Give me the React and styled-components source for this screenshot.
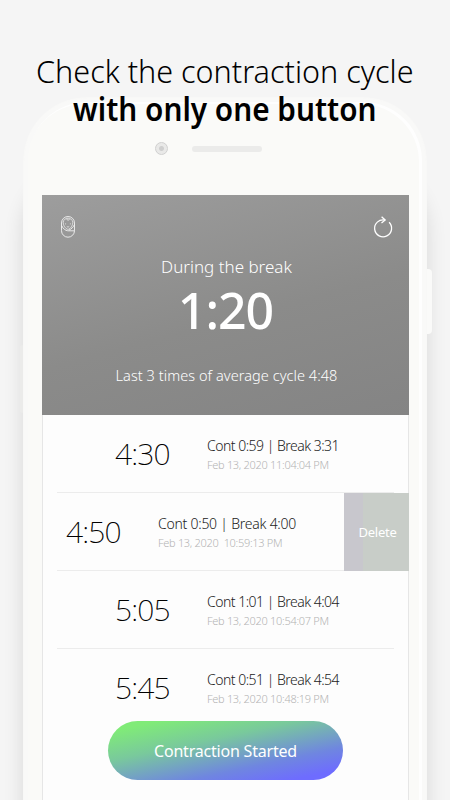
import styled, { createGlobalStyle } from 'styled-components'

const GlobalStyle = createGlobalStyle`
  * {
    box-sizing: border-box;
  }

  body {
    margin: 0;
    background: #f5f5f5;
    font-family: 'Noto Sans', 'Open Sans', sans-serif;
  }
`

const Page = styled.div`
  width: 450px;
  height: 800px;
  overflow: hidden;
  display: flex;
  flex-direction: column;
  align-items: center;
  background: #f5f5f5;
`

const Headline = styled.h1`
  position: relative;
  z-index: 1;
  height: 128px;
  margin: 0;
  padding-top: 52px;
  font-size: 32px;
  line-height: 38px;
  text-align: center;
  white-space: nowrap;
  color: #000;
`

// squeezed a little, the face is wider than the headline should be
const HeadlineText = styled.span`
  display: block;
  font-weight: ${props => (props.$bold ? 600 : 300)};
  transform: scaleX(${props => (props.$bold ? 0.93 : 0.954)});
`

const Phone = styled.div`
  position: relative;
  flex: none;
  width: 404px;
  height: 860px;
  margin-top: -31px;
  padding: 0 18px;
  display: flex;
  flex-direction: column;
  border-radius: 64px;
  border: 1px solid #f8f8f7;
  background: #fafaf8;
  box-shadow:
    inset 0 0 0 4px #f9f9f8,
    inset -2px 1px 0 5px #fefefe,
    0 72px 20px 0 rgba(0, 0, 0, 0.12);
`

// the hardware buttons sticking out of the sides
const SideButton = styled.div`
  position: absolute;
  top: ${props => props.$top}px;
  ${props => props.$side}: ${props => (props.$side === 'right' ? -6 : -4)}px;
  width: ${props => (props.$side === 'right' ? 5 : 3)}px;
  height: ${props => props.$height}px;
  border-radius: ${props => (props.$side === 'right' ? '0 4px 4px 0' : '4px 0 0 4px')};
  background: ${props => (props.$side === 'right' ? '#fafaf9' : '#ebebea')};
`

const Bezel = styled.div`
  height: 97px;
  flex: none;
  padding: 44px 0 0 113px;
  display: flex;
  align-items: flex-start;
  gap: 24px;
`

const Camera = styled.div`
  width: 13px;
  height: 13px;
  border: 1px solid #d0d0d0;
  border-radius: 50%;
  background: radial-gradient(circle, #cfcfcf 0 2px, #e9e9e8 3px);
`

const Speaker = styled.div`
  width: 70px;
  height: 6px;
  margin-top: 4px;
  border-radius: 3px;
  background: #ebebea;
`

const Screen = styled.div`
  flex: 1;
  width: 367px;
  background: #fdfdfd;
  border: solid #e6e6e6;
  border-width: 0 1px;
`

const Summary = styled.header`
  height: 220px;
  margin: 0 -1px;
  padding: 20px 15px 0 17px;
  display: flex;
  flex-direction: column;
  color: #fff;
  background: linear-gradient(165deg, #9d9d9d 0%, #8b8b8a 55%, #848484 100%);
`

const Toolbar = styled.div`
  display: flex;
  justify-content: space-between;
  height: 39px;
`

const Status = styled.div`
  font-size: 17px;
  line-height: 26px;
  font-weight: 300;
  text-align: center;
`

const Timer = styled.div`
  height: 60px;
  padding-right: 2px;
  font-size: 50px;
  line-height: 60px;
  font-weight: 500;
  text-align: center;
  letter-spacing: -1px;
`

const Average = styled(Status)`
  margin-top: 22px;
  font-size: 14.5px;
  letter-spacing: 0.06px;
`

const Row = styled.div`
  height: 78px;
  display: flex;
  padding-left: ${props => (props.$swiped ? 23 : 72)}px;
`

const Divider = styled.div`
  height: 1px;
  margin: -1px ${props => props.$right}px 0 14px;
  background: #ececec;
`

const Cycle = styled.div`
  width: 92px;
  flex: none;
  line-height: 78px;
  font-size: 30px;
  font-weight: 200;
  color: #000;
  letter-spacing: -0.9px;
`

const Details = styled.div`
  flex: 1;
  padding-top: 21px;
  white-space: nowrap;
`

const Lengths = styled.div`
  font-size: 14px;
  line-height: 20px;
  font-weight: 300;
  letter-spacing: ${props => props.$spacing ?? -0.55}px;
  word-spacing: 0.2px;
  color: #222;
`

const Stamp = styled.div`
  font-size: 11px;
  line-height: 18px;
  font-weight: 300;
  letter-spacing: -0.3px;
  white-space: pre;
  color: #b4b4b4;
`

const DeleteButton = styled.button`
  width: 65px;
  height: 78px;
  margin-right: -1px;
  padding: 0 0 0 2px;
  border: 0;
  font: 400 13px 'Noto Sans', sans-serif;
  letter-spacing: -0.25px;
  color: #fff;
  background: linear-gradient(90deg, #c8c7cd 0 19px, #c8cdc8 19px);
`

const StartButton = styled.button`
  display: block;
  width: 235px;
  height: 59px;
  margin: -6px 0 0 65px;
  position: relative;
  padding: 0;
  border: 0;
  border-radius: 30px;
  font: 400 16px 'Noto Sans', sans-serif;
  letter-spacing: -0.2px;
  color: #fff;
  background: linear-gradient(168deg, #80eb78 10%, #79c99c 37%, #6f86e0 70%, #6e6cff 90%);
`

const BabyIcon = () => (
  <svg width="16" height="24" viewBox="0 0 16 24" fill="none" stroke="#f2f2f2" strokeWidth="0.9">
    <rect x="2.5" y="1.5" width="13" height="20.7" rx="6.5" />
    <path d="M4.200 7.200c0 3.800 2.200 6.400 4.800 7.300 2.600-.9 4.800-3.500 4.800-7.300-.8-5.400-8.800-5.400-9.600 0z" strokeWidth=".7" />
    <path d="M8 3.400c-.6 2.400 2.600 2.400 2.200.4" strokeWidth=".8" />
    <path d="M6.600 8.400v1M11.400 8.400v1M7.800 11.500c.8.6 1.600.6 2.400 0" strokeWidth=".8" />
    <path d="M2.600 10.600c1.500 3.300 3.800 4.900 6.200 5.200h6.700M15.400 9.500c-.8 2.500-3 4.500-5.400 5.600" />
  </svg>
)

const ResetIcon = () => (
  <svg width="22" height="24" viewBox="0 0 22 24" fill="none" stroke="#fff" strokeWidth="1.3">
    <path d="M17.100 7.300A8.500 8.500 0 1 1 12.800 5" />
    <path d="M9.600 1.700l3.600 3.300-3.700 3" />
  </svg>
)

const contractions = [
  { cycle: '4:30', cont: '0:59', rest: '3:31', stamp: 'Feb 13, 2020 11:04:04 PM' },
  { cycle: '4:50', cont: '0:50', rest: '4:00', stamp: 'Feb 13, 2020  10:59:13 PM', swiped: true },
  { cycle: '5:05', cont: '1:01', rest: '4:04', stamp: 'Feb 13, 2020 10:54:07 PM' },
  { cycle: '5:45', cont: '0:51', rest: '4:54', stamp: 'Feb 13, 2020 10:48:19 PM' },
]

const Contraction = ({ item, last }) => (
  <>
    <Row $swiped={item.swiped}>
      <Cycle>{item.cycle}</Cycle>
      <Details>
        <Lengths $spacing={item.swiped ? -0.28 : undefined}>
          Cont {item.cont} | Break {item.rest}
        </Lengths>
        <Stamp>{item.stamp}</Stamp>
      </Details>
      {item.swiped && <DeleteButton>Delete</DeleteButton>}
    </Row>
    {!last && <Divider $right={item.swiped ? 64 : 14} />}
  </>
)

const App = () => (
  <Page>
    <GlobalStyle />
    <Headline>
      <HeadlineText>Check the contraction cycle</HeadlineText>
      <HeadlineText $bold>with only one button</HeadlineText>
    </Headline>
    <Phone>
      <SideButton $side="left" $top={247} $height={68} />
      <SideButton $side="right" $top={171} $height={65} />
      <Bezel>
        <Camera />
        <Speaker />
      </Bezel>
      <Screen>
        <Summary>
          <Toolbar>
            <BabyIcon />
            <ResetIcon />
          </Toolbar>
          <Status>During the break</Status>
          <Timer>1:20</Timer>
          <Average>Last 3 times of average cycle 4:48</Average>
        </Summary>
        {contractions.map((item, i) => (
          <Contraction key={item.stamp} item={item} last={i === contractions.length - 1} />
        ))}
        <StartButton>Contraction Started</StartButton>
      </Screen>
    </Phone>
  </Page>
)

export default App
